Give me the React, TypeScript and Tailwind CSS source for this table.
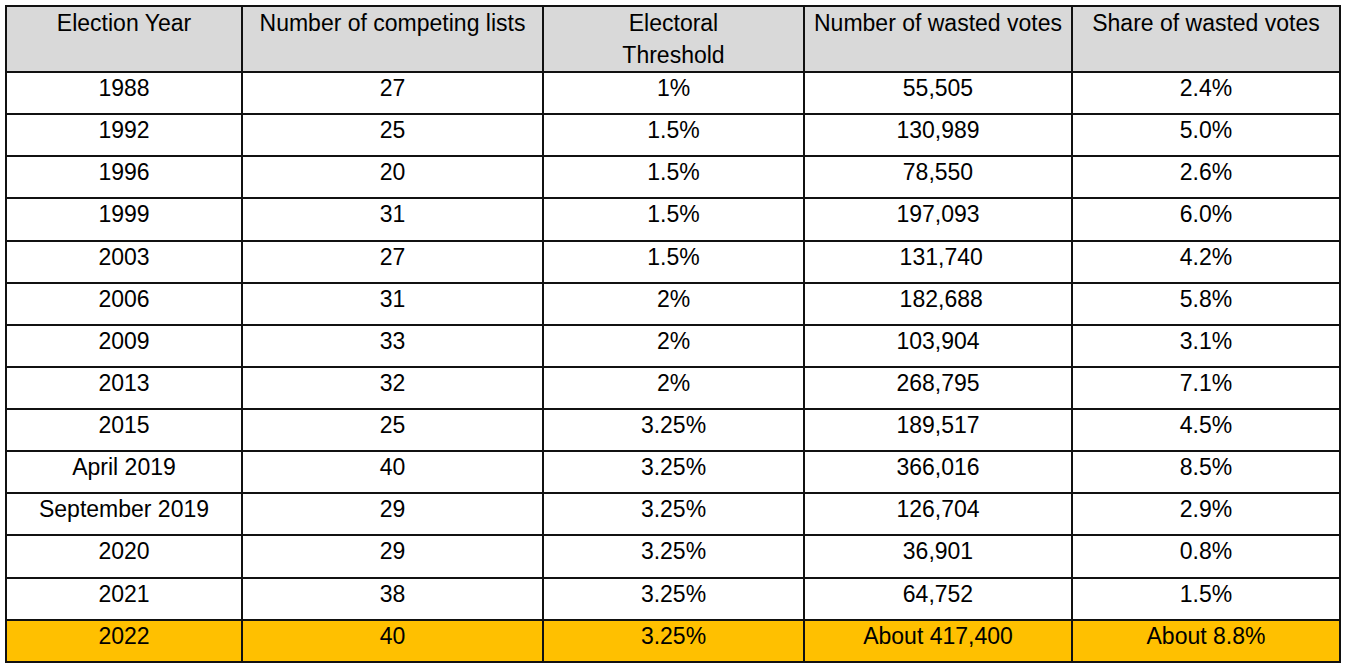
import React from "react";

const rows: [string, string, string, string, string][] = [
  ["1988", "27", "1%", "55,505", "2.4%"],
  ["1992", "25", "1.5%", "130,989", "5.0%"],
  ["1996", "20", "1.5%", "78,550", "2.6%"],
  ["1999", "31", "1.5%", "197,093", "6.0%"],
  ["2003", "27", "1.5%", "\u00a0131,740", "4.2%"],
  ["2006", "31", "2%", "\u00a0182,688", "5.8%"],
  ["2009", "33", "2%", "103,904", "3.1%"],
  ["2013", "32", "2%", "268,795", "7.1%"],
  ["2015", "25", "3.25%", "189,517", "4.5%"],
  ["April 2019", "40", "3.25%", "366,016", "8.5%"],
  ["September 2019", "29", "3.25%", "126,704", "2.9%"],
  ["2020", "29", "3.25%", "36,901", "0.8%"],
  ["2021", "38", "3.25%", "64,752", "1.5%"],
];

const headers = [
  "Election Year",
  "Number of competing lists",
  "Electoral Threshold",
  "Number of wasted votes",
  "Share of wasted votes",
];

export default function App() {
  return (
    <div className="bg-white w-[1349px] h-[671px] pt-[5px] pl-[5px]" style={{ fontFamily: '"Liberation Sans", Arial, sans-serif' }}>
      <table className="table-fixed border-collapse border-2 border-[#111] text-[23px] leading-[31.5px] text-black w-[1335px]">
        <colgroup>
          <col className="w-[236px]" />
          <col className="w-[301px]" />
          <col className="w-[261px]" />
          <col className="w-[268px]" />
          <col className="w-[268px]" />
        </colgroup>
        <thead>
          <tr className="h-[66px] bg-[#d9d9d9]">
            {headers.map((h) => (
              <th key={h} className={`border-2 border-[#111] font-normal text-center align-top pt-[1px] pb-0 ${h === "Electoral Threshold" ? "px-[70px]" : "px-1"}`}>
                {h}
              </th>
            ))}
          </tr>
        </thead>
        <tbody>
          {rows.map((r) => (
            <tr key={r[0]} className="h-[42.14px]">
              {r.map((c, i) => (
                <td key={i} className="border-2 border-[#111] text-center align-top pt-0 px-1">
                  {c}
                </td>
              ))}
            </tr>
          ))}
          <tr className="h-[42.14px] bg-[#ffc000]">
            {["2022", "40", "3.25%", "About 417,400", "About 8.8%"].map((c, i) => (
              <td key={i} className="border-2 border-[#111] text-center align-top pt-0 px-1">
                {c}
              </td>
            ))}
          </tr>
        </tbody>
      </table>
    </div>
  );
}
